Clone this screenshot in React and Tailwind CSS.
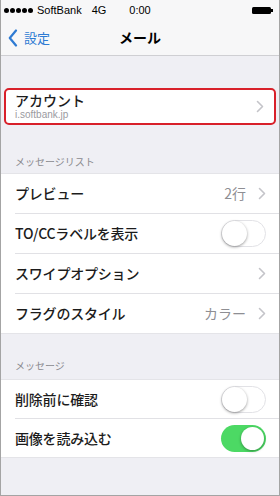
import React from "react";

const font = { fontFamily: '"Noto Sans CJK JP", "Liberation Sans", sans-serif' };

function Chevron() {
  return (
    <svg width="8" height="13" viewBox="0 0 8 13" className="shrink-0">
      <path d="M1.5 1.5 L6.5 6.5 L1.5 11.5" fill="none" stroke="#c4c4c9" strokeWidth="1.6" strokeLinecap="round" strokeLinejoin="round" />
    </svg>
  );
}

function Toggle({ on }) {
  return on ? (
    <div className="w-[45px] h-[27px] rounded-full bg-[#4cd964] flex items-center justify-end p-[2px] shrink-0">
      <div className="w-[23px] h-[23px] rounded-full bg-white shadow-[0_1px_3px_rgba(0,0,0,0.35)]" />
    </div>
  ) : (
    <div className="w-[45px] h-[27px] rounded-full bg-white border border-[#e2e2e6] flex items-center justify-start shrink-0">
      <div className="w-[25px] h-[25px] rounded-full bg-white shadow-[0_1px_3px_rgba(0,0,0,0.4)]" />
    </div>
  );
}

function Row({ label, value, chevron, toggle, h = "h-[39px]" }) {
  return (
    <div className={`${h} flex items-center pl-[14px] pr-[13px] bg-white`}>
      <span className="flex-1 text-[14px] font-medium text-[#1c1c1c] tracking-[-0.2px]">{label}</span>
      {value && <span className="text-[14px] text-[#8e8e93] mr-[12px]">{value}</span>}
      {chevron && <Chevron />}
      {toggle !== undefined && <Toggle on={toggle} />}
    </div>
  );
}

function Sep() {
  return (
    <div className="bg-white pl-[14px]">
      <div className="h-px bg-[#e1e1e5]" />
    </div>
  );
}

export default function App() {
  return (
    <div className="w-[280px] h-[496px] bg-[#efeff4] border-x border-b border-[#a4a4a4] overflow-hidden flex flex-col" style={font}>
      {/* status + nav */}
      <div className="bg-[#f7f7f8] border-b border-[#cfcfd3]">
        <div className="h-[20px] flex items-center px-[3px] text-[11px] text-black relative" style={{ fontFamily: '"Liberation Sans", sans-serif' }}>
          <div className="flex gap-[1px] items-center">
            {[0, 1, 2, 3, 4].map((i) => (
              <div key={i} className="w-[5px] h-[5px] rounded-full bg-black" />
            ))}
          </div>
          <span className="ml-[4px]">SoftBank</span>
          <span className="ml-[10px]">4G</span>
          <span className="absolute left-0 right-0 text-center pointer-events-none">0:00</span>
          <div className="ml-auto mr-[3px] flex items-center">
            <div className="w-[19px] h-[7px] rounded-[1.5px] bg-black" />
            <div className="w-[2px] h-[3px] bg-black" />
          </div>
        </div>
        <div className="h-[35px] flex items-center relative">
          <div className="flex items-center pl-[7px] text-[#2e7bd3]">
            <svg width="10" height="18" viewBox="0 0 10 18">
              <path d="M8 1.5 L1.8 9 L8 16.5" fill="none" stroke="#2e7bd3" strokeWidth="2.2" strokeLinecap="round" strokeLinejoin="round" />
            </svg>
            <span className="ml-[6px] text-[13px]">設定</span>
          </div>
          <span className="absolute left-0 right-0 text-center text-[14px] font-bold text-black pointer-events-none">メール</span>
        </div>
      </div>

      <div className="h-[32px]" />

      {/* account */}
      <div className="mx-[3px] h-[37px] border-2 border-[#d8202a] rounded-[5px] bg-white flex items-center pl-[9px] pr-[10px]">
        <div className="flex-1 flex flex-col leading-none">
          <span className="text-[14px] font-medium text-[#1c1c1c] leading-[16px]">アカウント</span>
          <span className="text-[10px] text-[#9a9a9f] leading-[13px]" style={{ fontFamily: '"Liberation Sans", sans-serif' }}>i.softbank.jp</span>
        </div>
        <Chevron />
      </div>

      <div className="h-[48px] flex items-end pl-[14px] pb-[4px]">
        <span className="text-[10px] text-[#8a8a8f]">メッセージリスト</span>
      </div>

      <div className="border-y border-[#e4e4e8]">
        <Row label="プレビュー" value="2行" chevron />
        <Sep />
        <Row label="TO/CCラベルを表示" toggle={false} />
        <Sep />
        <Row label="スワイプオプション" chevron />
        <Sep />
        <Row label="フラグのスタイル" value="カラー" chevron />
      </div>

      <div className="h-[45px] flex items-end pl-[14px] pb-[6px]">
        <span className="text-[10px] text-[#8a8a8f]">メッセージ</span>
      </div>

      <div className="border-y border-[#e4e4e8]">
        <Row label="削除前に確認" toggle={false} h="h-[38px]" />
        <Sep />
        <Row label="画像を読み込む" toggle={true} h="h-[38px]" />
      </div>
    </div>
  );
}
